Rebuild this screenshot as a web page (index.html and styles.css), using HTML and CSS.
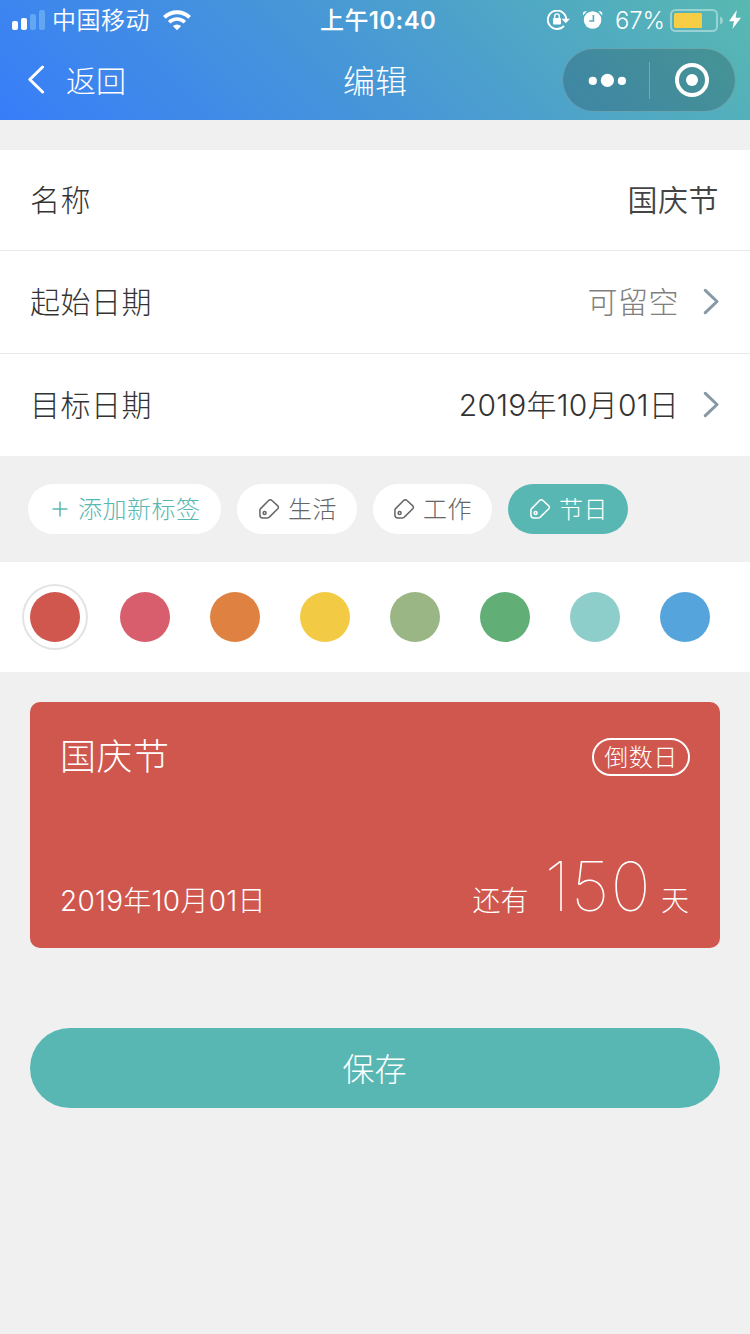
FILE: index.html
```html
<!doctype html>
<html lang="zh-CN">
  <head>
    <meta charset="UTF-8" />
    <meta name="viewport" content="width=device-width, initial-scale=1" />

    <title>编辑</title>

    <link rel="stylesheet" href="styles.css">
  </head>
  <body>
    <header class="c-header">
      <div class="c-status">
        <div class="c-status__left">
          <svg class="c-status__signal" width="34" height="22" viewBox="0 0 34 22" fill="#fff">
            <rect x="0" y="11" width="6" height="9" rx="2" />
            <rect x="9" y="8" width="6" height="12" rx="2" />
            <rect x="18" y="4" width="6" height="16" rx="2" fill="#63a6f1" />
            <rect x="27" y="0" width="6" height="20" rx="2" fill="#63a6f1" />
          </svg>
          <span class="c-status__carrier">中国移动</span>
          <svg class="c-status__wifi" width="28" height="22" viewBox="0 0 28 22">
            <path d="M1.4 7.4a18 18 0 0 1 25.2 0" fill="none" stroke="#fff" stroke-width="4" />
            <path d="M6.2 12.2a11 11 0 0 1 15.6 0" fill="none" stroke="#fff" stroke-width="3.6" />
            <path d="M14 20.2l-4.2-4.1a6 6 0 0 1 8.4 0z" fill="#fff" />
          </svg>
        </div>

        <div class="c-status__time">上午<b>10:40</b></div>

        <div class="c-status__right">
          <svg class="c-status__lock" width="24" height="22" viewBox="0 0 24 22">
            <path d="M17 15.8A9.2 9.2 0 1 1 19.2 9" fill="none" stroke="#fff" stroke-width="1.9" />
            <path d="M14.6 8.8h8.4l-4.2 4.4z" fill="#fff" />
            <rect x="6" y="8" width="8" height="6.6" rx="1" fill="#fff" />
            <path d="M7.7 9V6.2a2.3 2.3 0 0 1 4.6 0V9" fill="none" stroke="#fff" stroke-width="1.4" />
          </svg>
          <svg class="c-status__alarm" width="20" height="22" viewBox="0 0 20 22">
            <circle cx="9.6" cy="10" r="8.8" fill="#fff" />
            <path d="M0 5.4V2.6Q1.6.8 3.8 1.2zM19.2 5.4V2.6Q17.6.8 15.4 1.2z" fill="#fff" />
            <path d="M10.4 5v6H6.2" fill="none" stroke="#52abbf" stroke-width="1.6" />
          </svg>
          <span class="c-status__percent">67%</span>
          <svg class="c-status__battery" width="54" height="24" viewBox="0 0 54 24">
            <rect x="1" y="1" width="46" height="21" rx="4.5" fill="none" stroke="#fff" stroke-opacity=".4" stroke-width="2" />
            <rect x="4" y="4" width="28" height="15" rx="1.5" fill="#f8cd46" />
            <path d="M50 7.5q3 1.2 3 4t-3 4z" fill="#fff" fill-opacity=".4" />
          </svg>
          <svg class="c-status__bolt" width="12" height="20" viewBox="0 0 12 20">
            <path d="M7.8 0L0 11.2h5L3.4 19 12 7.8H6.7z" fill="#fff" />
          </svg>
        </div>
      </div>

      <nav class="c-nav">
        <div class="c-nav__back">
          <svg width="18" height="30" viewBox="0 0 18 30">
            <path d="M14.6 2L1.8 14.5 14.6 27" fill="none" stroke="#fff" stroke-width="3" stroke-linecap="round" stroke-linejoin="round" />
          </svg>
          <span class="c-nav__text">返回</span>
        </div>

        <div class="c-nav__title">编辑</div>

        <div class="c-capsule">
          <svg class="c-capsule__more" width="38" height="14" viewBox="0 0 38 14" fill="#fff">
            <circle cx="4.8" cy="7.9" r="4.1" />
            <circle cx="19.4" cy="7.4" r="6.6" />
            <circle cx="33.9" cy="7.9" r="4.1" />
          </svg>
          <span class="c-capsule__divider"></span>
          <svg class="c-capsule__close" width="34" height="34" viewBox="0 0 34 34">
            <circle cx="17" cy="17" r="15" fill="none" stroke="#fff" stroke-width="4" />
            <circle cx="17" cy="17" r="6" fill="#fff" />
          </svg>
        </div>
      </nav>
    </header>

    <main>
      <section class="c-form">
        <div class="c-row c-row--name">
          <span class="c-row__label">名称</span>
          <span class="c-row__value c-row__value--input">国庆节</span>
        </div>

        <div class="c-row">
          <span class="c-row__label">起始日期</span>
          <span class="c-row__value c-row__value--empty">可留空</span>
          <svg class="c-row__arrow" width="16" height="28" viewBox="0 0 16 28">
            <path d="M2.3 2.3L14 13.5 2.3 24.7" />
          </svg>
        </div>

        <div class="c-row">
          <span class="c-row__label">目标日期</span>
          <span class="c-row__value c-row__value--date">2019年10月01日</span>
          <svg class="c-row__arrow" width="16" height="28" viewBox="0 0 16 28">
            <path d="M2.3 2.3L14 13.5 2.3 24.7" />
          </svg>
        </div>
      </section>

      <section class="c-tags">
        <div class="c-tag c-tag--add">
          <svg width="16" height="16" viewBox="0 0 16 16">
            <path d="M8 .5v15M.5 8h15" />
          </svg>
          <span>添加新标签</span>
        </div>
        <div class="c-tag">
          <svg width="22" height="22" viewBox="0 0 22 22">
            <path d="M2.6 10.6L10.6 2.5a2.4 2.4 0 0 1 3.4 0l5.8 5.4a2 2 0 0 1 0 2.9l-8.3 8.1a4 4 0 0 1-2.8 1.2H4.9a3 3 0 0 1-3-3v-4.6q0-1.2.7-1.9z" />
            <circle cx="6.6" cy="15" r="1.5" />
          </svg>
          <span>生活</span>
        </div>
        <div class="c-tag c-tag--work">
          <svg width="22" height="22" viewBox="0 0 22 22">
            <path d="M2.6 10.6L10.6 2.5a2.4 2.4 0 0 1 3.4 0l5.8 5.4a2 2 0 0 1 0 2.9l-8.3 8.1a4 4 0 0 1-2.8 1.2H4.9a3 3 0 0 1-3-3v-4.6q0-1.2.7-1.9z" />
            <circle cx="6.6" cy="15" r="1.5" />
          </svg>
          <span>工作</span>
        </div>
        <div class="c-tag c-tag--active">
          <svg width="22" height="22" viewBox="0 0 22 22">
            <path d="M2.6 10.6L10.6 2.5a2.4 2.4 0 0 1 3.4 0l5.8 5.4a2 2 0 0 1 0 2.9l-8.3 8.1a4 4 0 0 1-2.8 1.2H4.9a3 3 0 0 1-3-3v-4.6q0-1.2.7-1.9z" />
            <circle cx="6.6" cy="15" r="1.5" />
          </svg>
          <span>节日</span>
        </div>
      </section>

      <section class="c-colors">
        <span class="c-color c-color--red c-color--selected"></span>
        <span class="c-color c-color--pink"></span>
        <span class="c-color c-color--orange"></span>
        <span class="c-color c-color--yellow"></span>
        <span class="c-color c-color--olive"></span>
        <span class="c-color c-color--green"></span>
        <span class="c-color c-color--mint"></span>
        <span class="c-color c-color--blue"></span>
      </section>

      <section class="c-card">
        <div class="c-card__top">
          <h2 class="c-card__title">国庆节</h2>
          <span class="c-card__badge">倒数日</span>
        </div>
        <div class="c-card__bottom">
          <span class="c-card__date">2019年10月01日</span>
          <span class="c-card__left">还有</span>
          <span class="c-card__count">150</span>
          <span class="c-card__unit">天</span>
        </div>
      </section>

      <button class="c-save" type="button">保存</button>
    </main>
  </body>
</html>
```
FILE: styles.css
```css
* {
  box-sizing: border-box;
}

body {
  margin: 0;
  min-height: 1334px;
  background-color: #f0f0f0;
  font-family: 'Inter', 'Noto Sans CJK SC', sans-serif;
  font-weight: 300;
  color: #333;
}

svg {
  display: block;
  flex: none;
}

/* Header */

.c-header {
  height: 120px;
  background: linear-gradient(45deg, #387df9, #4899d5 50%, #58b9b0);
  color: #fff;
}

.c-status {
  display: grid;
  grid-template-columns: 320px 1fr 203px;
  height: 40px;
  padding-top: 1px;
  line-height: 40px;
  font-size: 24px;
}

.c-status__left,
.c-status__right {
  display: flex;
  align-items: center;
  height: 40px;
}

.c-status__left {
  padding-left: 12px;
}

.c-status__carrier {
  margin-left: 6px;
  font-weight: 350;
  letter-spacing: 0.5px;
}

.c-status__wifi {
  margin-left: 13px;
}

.c-status__time {
  font-weight: 500;
  letter-spacing: 0.4px;
}

.c-status__time b {
  font-weight: 600;
}

.c-status__percent {
  width: 49px;
  margin-left: 12px;
  font-weight: 350;
  letter-spacing: -0.2px;
  white-space: nowrap;
}

.c-status__alarm {
  margin-left: 12px;
}

.c-status__battery {
  margin-left: 6px;
}

.c-status__bolt {
  margin: 0 0 2px 5px;
}

.c-nav {
  display: grid;
  grid-template-columns: 1fr 94px 1fr;
  align-items: center;
  height: 80px;
}

.c-nav__back {
  display: flex;
  align-items: center;
  gap: 20px;
  padding-left: 28px;
  font-size: 30px;
}

.c-nav__text {
  padding-bottom: 3px;
}

.c-nav__title {
  padding-bottom: 3px;
  font-size: 32px;
  text-align: center;
}

.c-capsule {
  display: flex;
  align-items: center;
  justify-self: end;
  width: 174px;
  height: 64px;
  margin-right: 14px;
  padding-left: 25px;
  border: 1px solid rgba(255, 255, 255, 0.2);
  border-radius: 32px;
  background-color: rgba(0, 0, 0, 0.18);
}

.c-capsule__divider {
  width: 1px;
  height: 37px;
  margin: 0 25px 0 23px;
  background-color: rgba(255, 255, 255, 0.25);
}

/* Form rows */

.c-form {
  margin-top: 30px;
  background-color: #fff;
}

.c-row {
  display: flex;
  align-items: center;
  height: 103px;
  padding: 0 31px 4px 30px;
  border-top: 1px solid #e8e8e8;
  font-size: 30px;
  letter-spacing: 0.5px;
}

.c-row--name {
  height: 100px;
  border-top: 0;
}

.c-row__value {
  margin-left: auto;
}

.c-row__value--input {
  font-weight: 350;
  color: #444;
}

.c-row__value--empty {
  color: #808080;
}

.c-row__value--date {
  letter-spacing: 0.25px;
}

.c-row__arrow {
  margin: 4px 0 0 24px;
  fill: none;
  stroke: #8899a6;
  stroke-width: 3;
  stroke-linecap: round;
  stroke-linejoin: round;
}

/* Tags */

.c-tags {
  display: flex;
  gap: 16px;
  padding: 28px;
}

.c-tag {
  display: flex;
  align-items: center;
  gap: 8px;
  width: 120px;
  height: 50px;
  padding-left: 21px;
  border-radius: 25px;
  background-color: #fff;
  font-size: 24px;
  letter-spacing: 0.5px;
  white-space: nowrap;
  color: #666;
}

.c-tag span {
  padding-bottom: 3px;
}

.c-tag svg {
  fill: none;
  stroke: currentColor;
  stroke-width: 1.5;
}

.c-tag--add {
  gap: 10px;
  width: 193px;
  padding-left: 24px;
  color: #58b7b3;
}

.c-tag--work {
  width: 119px;
  padding-left: 20px;
}

.c-tag--active {
  background-color: #58b7b3;
  color: #fff;
}

/* Color picker */

.c-colors {
  display: flex;
  gap: 40px;
  height: 110px;
  padding: 30px;
  background-color: #fff;
}

.c-color {
  width: 50px;
  height: 50px;
  border-radius: 50%;
}

.c-color--selected {
  box-shadow: 0 0 0 6px #fff, 0 0 0 8px #e3e3e3;
}

.c-color--red {
  background-color: #cf574e;
}
.c-color--pink {
  background-color: #d85d6d;
}
.c-color--orange {
  background-color: #df8141;
}
.c-color--yellow {
  background-color: #f2ca44;
}
.c-color--olive {
  background-color: #9ab685;
}
.c-color--green {
  background-color: #61af77;
}
.c-color--mint {
  background-color: #8dcecb;
}
.c-color--blue {
  background-color: #55a5dc;
}

/* Preview card */

.c-card {
  display: flex;
  flex-direction: column;
  justify-content: space-between;
  height: 246px;
  margin: 30px 30px 0;
  padding: 26px 30px 27px;
  border-radius: 10px;
  background-color: #cf574e;
  color: #fff;
}

.c-card__top {
  display: flex;
  align-items: center;
  justify-content: space-between;
}

.c-card__title {
  margin: 0;
  font-size: 36px;
  font-weight: 300;
  letter-spacing: 0.5px;
}

.c-card__badge {
  width: 98px;
  height: 38px;
  margin-top: 6px;
  border: 2px solid #fff;
  border-radius: 19px;
  font-size: 24px;
  line-height: 36px;
  letter-spacing: 0.5px;
  text-align: center;
}

.c-card__bottom {
  display: flex;
  align-items: baseline;
  font-size: 28px;
  line-height: 40px;
}

.c-card__date {
  letter-spacing: 0.25px;
}

.c-card__left {
  margin-left: auto;
}

.c-card__count {
  margin: 0 9px 0 16px;
  font-size: 68px;
  font-weight: 100;
  letter-spacing: 1.3px;
}

.c-card__unit {
  margin-right: 1px;
}

/* Save button */

.c-save {
  display: block;
  width: 690px;
  height: 80px;
  margin: 80px auto 0;
  padding: 0 1px 3px 0;
  border: 0;
  border-radius: 40px;
  background-color: #58b7b3;
  font: inherit;
  font-size: 32px;
  color: #fff;
}
```
